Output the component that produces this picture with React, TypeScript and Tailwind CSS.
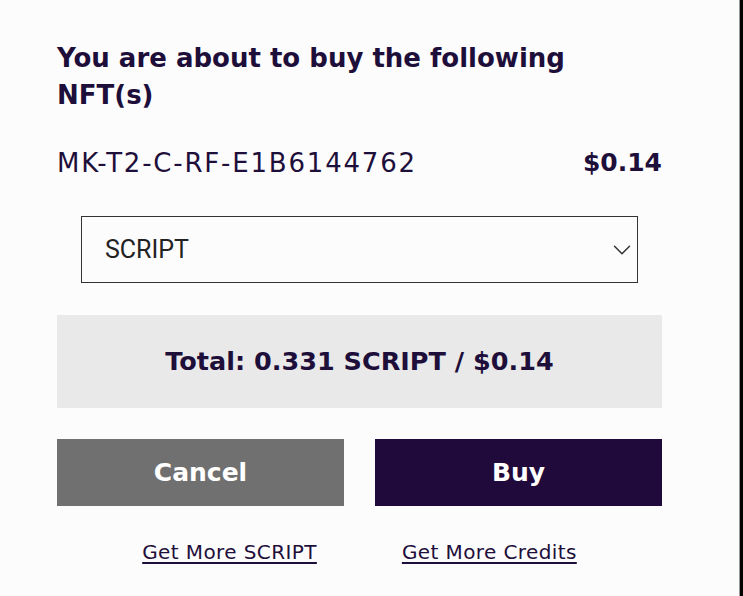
import { ChevronDown } from 'lucide-react';

const ink = 'text-[#1e0f3a]';

function App() {
  return (
    <div className="min-h-screen w-full flex bg-[#fdfcfd]" style={{ fontFamily: '"DejaVu Sans", "Open Sans", sans-serif' }}>
      <div className="flex-1 pl-[57px] pr-[77px] pt-[40px]">
        <h1 className={`max-w-[540px] text-[26px] leading-[37px] font-bold ${ink}`}>
          You are about to buy the following NFT(s)
        </h1>

        <div className={`mt-[32px] flex justify-between items-center ${ink}`}>
          <span className="text-[26px] leading-[34px] font-normal tracking-[1.8px]">MK-T2-C-RF-E1B6144762</span>
          <span className="text-[25px] leading-[34px] font-bold">$0.14</span>
        </div>

        <div className="mt-[36px] mx-[24px] h-[67px] border-[1.5px] border-[#333] flex items-center justify-between pl-[23px] pr-0 bg-[#fdfcfd]">
          <span className="text-[25px] text-[#222]" style={{ fontFamily: 'Roboto, sans-serif' }}>SCRIPT</span>
          <ChevronDown className="w-[30px] h-[30px] text-[#333]" strokeWidth={1.2} />
        </div>

        <div className="mt-[32px] h-[93px] bg-[#e9e9e9] flex items-center justify-center">
          <span className={`text-[25.5px] font-bold ${ink}`}>Total: 0.331 SCRIPT / $0.14</span>
        </div>

        <div className="mt-[31px] grid grid-cols-2 gap-[31px]">
          <button className="h-[67px] bg-[#707070] text-white text-[25px] font-bold">Cancel</button>
          <button className="h-[67px] bg-[#1f0a3b] text-white text-[25px] font-bold">Buy</button>
        </div>

        <div className={`mt-[31px] flex justify-center gap-[85px] text-[20px] tracking-[0.4px] ${ink}`}>
          <a className="underline underline-offset-[3px]" href="#">Get More SCRIPT</a>
          <a className="underline underline-offset-[3px]" href="#">Get More Credits</a>
        </div>
      </div>
      <div className="w-[4px] border-l border-[#999] bg-black" />
    </div>
  );
}

export default App;
